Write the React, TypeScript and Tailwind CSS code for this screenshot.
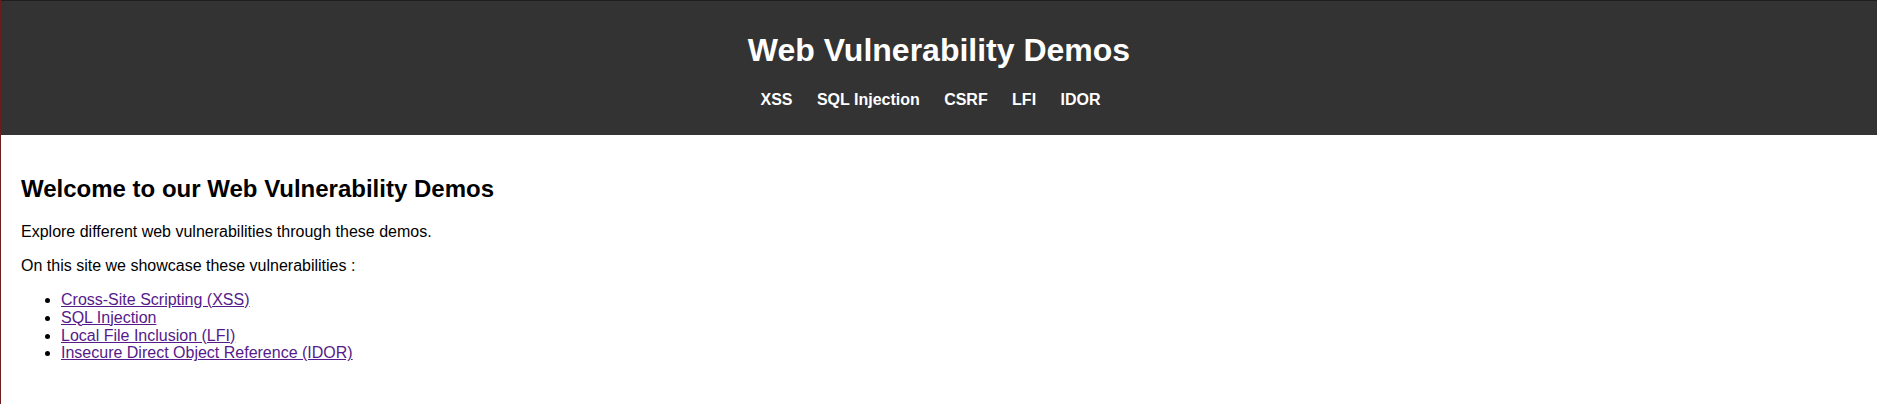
const navLinks = ["XSS", "SQL Injection", "CSRF", "LFI", "IDOR"];

const vulns = [
  "Cross-Site Scripting (XSS)",
  "SQL Injection",
  "Local File Inclusion (LFI)",
  "Insecure Direct Object Reference (IDOR)",
];

export default function App() {
  return (
    <div className="min-h-[404px] bg-white border-l border-[#6b1d1d] font-['Liberation_Sans',Arial,sans-serif] text-black">
      {/* Header */}
      <header className="bg-[#333333] border-t border-[#1e1e1e] py-[10px] text-center text-white">
        <h1 className="my-[21.44px] text-[32px] leading-[36.8px] font-bold">
          Web Vulnerability Demos
        </h1>
        <nav className="mb-4 flex justify-center gap-[24.4px] pr-[17px] text-base leading-[18.4px] font-bold">
          {navLinks.map((link) => (
            <a key={link} href="#" className="text-white no-underline">
              {link}
            </a>
          ))}
        </nav>
      </header>

      {/* Content */}
      <main className="px-5 pt-[21px] pb-5">
        <h2 className="mt-[19.92px] mb-[19.92px] text-2xl leading-[26.8px] font-bold">
          Welcome to our Web Vulnerability Demos
        </h2>
        <p className="my-4 text-base leading-[18px]">
          Explore different web vulnerabilities through these demos.
        </p>
        <p className="my-4 text-base leading-[18px]">
          On this site we showcase these vulnerabilities :
        </p>
        <ul className="my-4 list-disc pl-10 text-base leading-[17.9px]">
          {vulns.map((v) => (
            <li key={v}>
              <a href="#" className="text-[#551a8b] underline">
                {v}
              </a>
            </li>
          ))}
        </ul>
      </main>
    </div>
  );
}
